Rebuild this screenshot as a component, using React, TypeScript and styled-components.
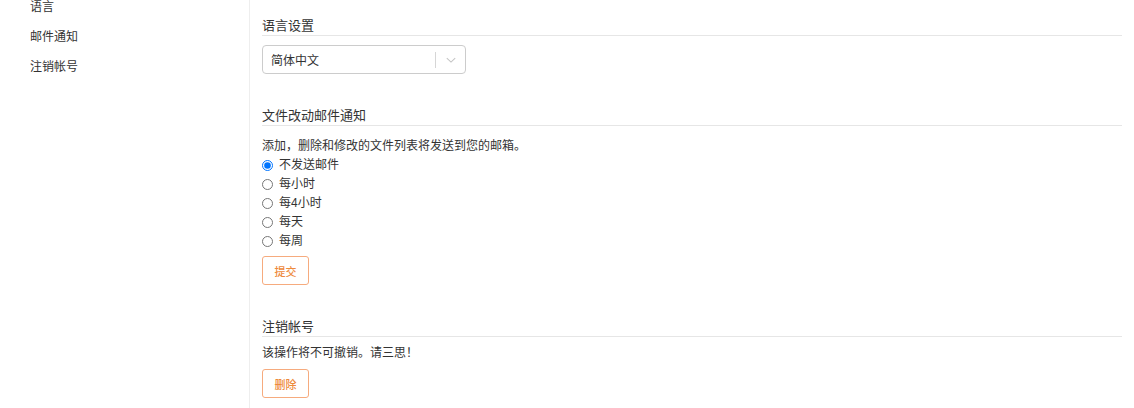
import React, { useState } from "react";
import styled, { createGlobalStyle } from "styled-components";

const GlobalStyle = createGlobalStyle`
  body {
    margin: 0;
    background: #fff;
    font-family: "Liberation Sans", "Noto Sans CJK SC", sans-serif;
    color: #333;
  }
`;

const options = [
  { value: "none", label: "不发送邮件" },
  { value: "hour", label: "每小时" },
  { value: "4hours", label: "每4小时" },
  { value: "day", label: "每天" },
  { value: "week", label: "每周" },
];

function App() {
  const [freq, setFreq] = useState("none");

  return (
    <>
      <GlobalStyle />
      <Page>
        <Sidebar>
          <NavList>
            <NavItem>语言</NavItem>
            <NavItem>邮件通知</NavItem>
            <NavItem>注销帐号</NavItem>
          </NavList>
        </Sidebar>

        <Main>
          <Section first>
            <Heading>语言设置</Heading>
            <SelectBox>
              <SelectValue>简体中文</SelectValue>
              <Indicator>
                <Separator />
                <svg width="12" height="12" viewBox="0 0 20 20">
                  <path
                    d="M3 7 L10 13.5 L17 7"
                    fill="none"
                    stroke="#c4c4c4"
                    strokeWidth="1.8"
                  />
                </svg>
              </Indicator>
            </SelectBox>
          </Section>

          <Section>
            <Heading>文件改动邮件通知</Heading>
            <Text gap={11}>添加，删除和修改的文件列表将发送到您的邮箱。</Text>
            <RadioList>
              {options.map((o) => (
                <RadioLabel key={o.value}>
                  <input
                    type="radio"
                    name="freq"
                    checked={freq === o.value}
                    onChange={() => setFreq(o.value)}
                  />
                  {o.label}
                </RadioLabel>
              ))}
            </RadioList>
            <Button gap={5}>提交</Button>
          </Section>

          <Section>
            <Heading>注销帐号</Heading>
            <Text gap={7}>该操作将不可撤销。请三思！</Text>
            <Button gap={6}>删除</Button>
          </Section>
        </Main>
      </Page>
    </>
  );
}

const Page = styled.div`
  display: flex;
  min-height: 408px;
`;

const Sidebar = styled.div`
  width: 249px;
  flex-shrink: 0;
  border-right: 1px solid #eeeeee;
  overflow: hidden;
`;

const NavList = styled.ul`
  list-style: none;
  margin: -8px 0 0;
  padding: 0 0 0 30px;
`;

const NavItem = styled.li`
  font-size: 12px;
  line-height: 30px;
  color: #333;
  cursor: pointer;
`;

const Main = styled.div`
  flex: 1;
  padding: 0 12px 0 12px;
`;

const Section = styled.div<{ first?: boolean }>`
  margin-top: ${(p) => (p.first ? "17px" : "33px")};
`;

const Heading = styled.h3`
  margin: 0;
  font-size: 13px;
  font-weight: normal;
  line-height: 18px;
  color: #333;
  border-bottom: 1px solid #e6e6e6;
`;

const SelectBox = styled.div`
  margin-top: 9px;
  width: 204px;
  height: 29px;
  box-sizing: border-box;
  border: 1px solid #cccccc;
  border-radius: 4px;
  display: flex;
  align-items: center;
  justify-content: space-between;
  background: #fff;
`;

const SelectValue = styled.span`
  padding-left: 8px;
  font-size: 12px;
  color: #333;
`;

const Indicator = styled.div`
  display: flex;
  align-items: center;
  gap: 9px;
  padding-right: 8px;
`;

const Separator = styled.span`
  width: 1px;
  height: 16px;
  background: #d6d6d6;
`;

const Text = styled.p<{ gap: number }>`
  margin: ${(p) => p.gap}px 0 0;
  font-size: 12px;
  line-height: 19px;
  color: #333;
`;

const RadioList = styled.div`
  display: flex;
  flex-direction: column;
`;

const RadioLabel = styled.label`
  display: flex;
  align-items: center;
  gap: 6px;
  font-size: 12px;
  line-height: 19px;
  color: #333;
  input {
    margin: 0;
    width: 11px;
    height: 11px;
  }
`;

const Button = styled.button<{ gap: number }>`
  display: block;
  margin-top: ${(p) => p.gap}px;
  width: 47px;
  height: 29px;
  padding: 0;
  background: #fff;
  border: 1px solid #f6ab7e;
  border-radius: 3px;
  color: #ee8a3c;
  font-family: inherit;
  font-size: 11px;
  font-weight: 500;
  cursor: pointer;
`;

export default App;
